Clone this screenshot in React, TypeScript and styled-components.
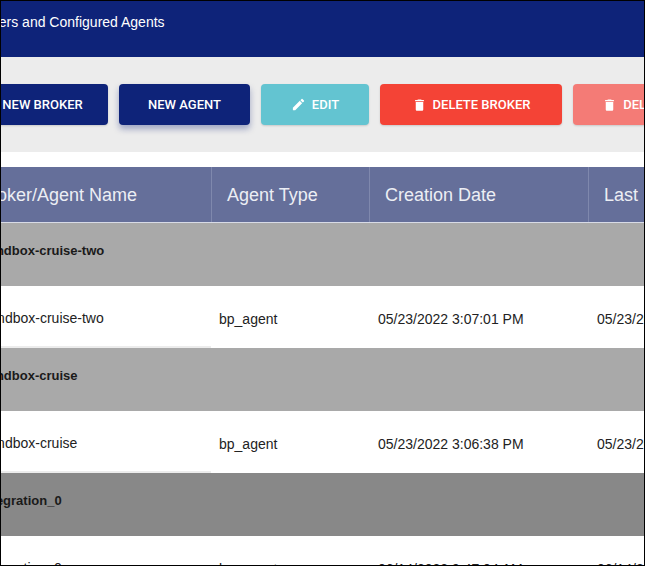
import styled, {createGlobalStyle} from "styled-components"

const Global = createGlobalStyle`
  body {
    margin: 0;
    font-family: "Liberation Sans", Arial, sans-serif;
    background: #fff;
  }
`

const Frame = styled.div`
  width: 645px;
  height: 566px;
  box-sizing: border-box;
  border: 1px solid #000;
  overflow: hidden;
  background: #fff;
`

const Shift = styled.div`
  margin-left: -37px;
  width: 900px;
`

const TopBar = styled.div`
  height: 56px;
  background: #0e2379;
  color: #fff;
  font-size: 14px;
  padding: 13px 0 0 6px;
  box-sizing: border-box;
`

const Toolbar = styled.div`
  background: #ececec;
  height: 95px;
  display: flex;
  align-items: flex-start;
  gap: 11px;
  padding: 27px 0 0 13px;
  box-sizing: border-box;
`

const Button = styled.button<{$bg: string; $w: number; $raised?: boolean}>`
  width: ${({$w}) => $w}px;
  height: 41px;
  flex: none;
  border: none;
  border-radius: 4px;
  background: ${({$bg}) => $bg};
  color: #fff;
  font-family: Roboto, "Liberation Sans", sans-serif;
  font-weight: 500;
  font-size: 13px;
  display: flex;
  align-items: center;
  justify-content: center;
  gap: 6px;
  box-shadow: ${({$raised}) =>
    $raised ? "0 4px 6px rgba(14,35,121,0.35)" : "0 1px 2px rgba(0,0,0,0.15)"};
`

const Spacer = styled.div`
  height: 15px;
`

const HeadRow = styled.div`
  display: grid;
  grid-template-columns: 247px 158px 219px 1fr;
  background: #656f9a;
  height: 56px;
  border-bottom: 1px solid #d8dbe6;
  box-sizing: border-box;
`

const HeadCell = styled.div<{$sep?: boolean}>`
  display: flex;
  align-items: center;
  padding: 2px 0 0 15px;
  color: #eceef4;
  font-size: 18px;
  border-left: ${({$sep}) => ($sep ? "1px solid #7f88ad" : "none")};
`

const GroupRow = styled.div<{$bg: string}>`
  height: 63px;
  background: ${({$bg}) => $bg};
  font-weight: bold;
  font-size: 13px;
  color: #1a1a1a;
  padding: 20px 0 0 16px;
  box-sizing: border-box;
`

const DataRow = styled.div`
  display: grid;
  grid-template-columns: 247px 158px 219px 1fr;
  height: 62px;
  font-size: 14px;
  color: #222;
`

const DataCell = styled.div<{$pad: number; $line?: boolean}>`
  padding: 3px 0 0 ${({$pad}) => $pad}px;
  height: 100%;
  display: flex;
  align-items: center;
  box-sizing: border-box;
  border-bottom: ${({$line}) => ($line ? "2px solid #ececec" : "none")};
`

const Pencil = () => (
  <svg width="15" height="15" viewBox="0 0 24 24" fill="#fff">
    <path d="M3 17.25V21h3.75L17.81 9.94l-3.75-3.75L3 17.25zM20.71 7.04a1 1 0 0 0 0-1.41l-2.34-2.34a1 1 0 0 0-1.410 0l-1.83 1.83 3.75 3.75 1.83-1.83z" />
  </svg>
)

const Trash = () => (
  <svg width="15" height="16" viewBox="0 0 24 24" fill="#fff">
    <path d="M6 19c0 1.1.9 2 2 2h8c1.1 0 2-.9 2-2V7H6v12zM19 4h-3.5l-1-1h-5l-1 1H5v2h14V4z" />
  </svg>
)

const rows = [
  {group: "Sandbox-cruise-two", name: "Sandbox-cruise-two", date: "05/23/2022 3:07:01 PM", bg: "#a9a9a9"},
  {group: "Sandbox-cruise", name: "Sandbox-cruise", date: "05/23/2022 3:06:38 PM", bg: "#a9a9a9"},
  {group: "Integration_0", name: "Integration_0", date: "06/14/2022 9:47:04 AM", bg: "#888888"},
]

export default function App() {
  return (
    <Frame>
      <Global />
      <Shift>
        <TopBar>Brokers and Configured Agents</TopBar>
        <Toolbar>
          <Button $bg="#0e2379" $w={131}>NEW BROKER</Button>
          <Button $bg="#0e2379" $w={131} $raised>NEW AGENT</Button>
          <Button $bg="#63c4d1" $w={108}><Pencil />EDIT</Button>
          <Button $bg="#f44336" $w={182}><Trash />DELETE BROKER</Button>
          <Button $bg="#f47b76" $w={170}><Trash />DELETE AGENT</Button>
        </Toolbar>
        <Spacer />
        <HeadRow>
          <HeadCell>Broker/Agent Name</HeadCell>
          <HeadCell $sep>Agent Type</HeadCell>
          <HeadCell $sep>Creation Date</HeadCell>
          <HeadCell $sep>Last Modified</HeadCell>
        </HeadRow>
        {rows.map((r) => (
          <div key={r.group}>
            <GroupRow $bg={r.bg}>{r.group}</GroupRow>
            <DataRow>
              <DataCell $pad={16} $line>{r.name}</DataCell>
              <DataCell $pad={8}>bp_agent</DataCell>
              <DataCell $pad={9}>{r.date}</DataCell>
              <DataCell $pad={9}>{r.date}</DataCell>
            </DataRow>
          </div>
        ))}
      </Shift>
    </Frame>
  )
}
